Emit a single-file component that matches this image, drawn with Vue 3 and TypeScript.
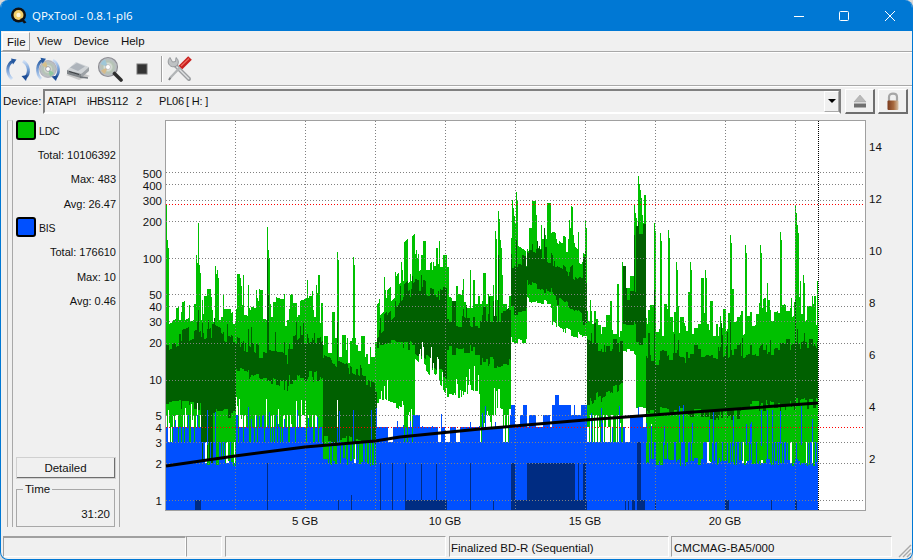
<script setup lang="ts">
type Seg = [number, number, number, number, number, number, number, number, number, number, number, number, number]

// x0,x1, lightTop0,1, darkTop0,1, darkBot0,1, lightBot0,1, blueTop, pWhite, pBlueFront
const segs: Seg[] = [
  [166, 201, 322, 304, 345, 328, 405, 405, 418, 418, 427, 0.2, 0.06],
  [201, 213, 310, 310, 335, 330, 462, 462, 462, 462, 442, 0.02, 0.02],
  [213, 236, 322, 318, 330, 345, 412, 412, 462, 462, 442, 0.05, 0.06],
  [236, 288, 304, 312, 345, 360, 370, 385, 425, 430, 427, 0.12, 0.12],
  [288, 323, 312, 308, 345, 335, 380, 375, 425, 430, 427, 0.12, 0.12],
  [323, 377, 350, 350, 352, 385, 441, 441, 462, 462, 442, 0.03, 0.05],
  [377, 415, 312, 272, 330, 285, 345, 345, 400, 412, 427, 0.15, 0.08],
  [415, 447, 268, 266, 285, 295, 350, 375, 356, 392, 427, 0.4, 0.08],
  [447, 480, 292, 296, 322, 325, 350, 350, 395, 392, 427, 0.25, 0.06],
  [480, 511, 304, 302, 318, 316, 360, 365, 412, 412, 427, 0.3, 0.08],
  [511, 527, 244, 254, 260, 265, 312, 312, 340, 342, 415, 0.05, 0.05],
  [527, 552, 236, 240, 250, 256, 284, 292, 300, 305, 402, 0.02, 0.0],
  [552, 587, 239, 262, 258, 285, 296, 322, 322, 340, 405, 0.02, 0.0],
  [587, 623, 322, 322, 345, 345, 403, 385, 442, 442, 442, 0.04, 0.08],
  [623, 636, 276, 276, 296, 296, 322, 322, 352, 352, 427, 0.03, 0.0],
  [636, 646, 206, 206, 230, 230, 340, 340, 405, 405, 427, 0.1, 0.1],
  [646, 740, 324, 322, 358, 352, 412, 416, 462, 462, 442, 0.01, 0.12],
  [740, 818, 320, 314, 350, 342, 408, 402, 462, 462, 442, 0.01, 0.12],
]

const spikes: Record<number, number> = {
  166: 205, 167: 240, 196: 255, 198: 223, 199: 265, 215: 266, 217: 270, 240: 278, 256: 290, 267: 227, 268: 250,
  316: 285, 337: 252, 353: 257, 385: 290, 401: 262, 416: 250, 431: 262, 495: 231, 498: 211, 500: 240, 512: 200,
  514: 216, 516: 192, 569: 220, 573: 235, 585: 220, 622: 262, 634: 205, 636: 218, 638: 176, 640: 190, 642: 215,
  654: 223, 660: 233, 668: 230, 676: 262, 690: 262, 705: 270, 730: 235, 745: 245, 760: 245, 780: 232, 795: 205,
  797: 225, 803: 275, 812: 296,
}
const darkSpikes: Record<number, number> = {
  267: 258, 268: 295, 198: 310, 337: 322, 495: 300, 498: 255, 516: 240, 569: 272, 585: 250, 634: 235, 638: 222,
  654: 290, 795: 300, 730: 320,
}
const levels = [463, 442, 427, 415, 405, 395]
const lowEnds = [415, 427, 442]

const darkBlueRanges: [number, number, number][] = [
  [195, 201, 500], [267, 268, 463], [338, 339, 500], [351, 352, 495], [405, 447, 500], [380, 381, 463], [392, 393, 463],
  [405, 406, 463], [421, 422, 463], [436, 437, 463], [470, 471, 463], [493, 494, 500], [511, 587, 500], [511, 515, 463],
  [527, 575, 463], [578, 579, 463], [583, 586, 463], [625, 626, 500], [628, 629, 500], [632, 635, 500], [637, 641, 442],
  [641, 645, 500], [655, 656, 500], [725, 729, 500], [771, 772, 500], [795, 797, 500],
]

let seed = 20240611
const rnd = (): number => {
  seed = (Math.imul(seed, 1664525) + 1013904223) >>> 0
  return seed / 4294967296
}
const f = (v: number): string => Math.round(v).toString()

let blue = ''
let blueFront = ''
let light = ''
let dark = ''
let darkBlue = ''

let hold = 0
let nLt = 0
let nDt = 0
let nDb = 0
let nLb = 0
let hb = 0
let levelShift = 0

for (const s of segs) {
  for (let x = s[0]; x < s[1]; x++) {
    const t = (x - s[0]) / (s[1] - s[0])
    const mix = (a: number, b: number): number => a + (b - a) * t
    if (hold <= 0) {
      hold = 1 + Math.floor(rnd() * 4)
      nLt = (rnd() - 0.5) * 30
      if (rnd() < 0.22) nLt -= rnd() * 34
      nDt = (rnd() - 0.5) * 16
      if (rnd() < 0.08) nDt -= rnd() * 26
      nDb = (rnd() - 0.5) * 12
      nLb = (rnd() - 0.5) * 8
    }
    hold--
    if (hb <= 0) {
      hb = 1 + Math.floor(rnd() * 5)
      const r = rnd()
      levelShift = r < 0.18 ? 1 : r < 0.3 ? -1 : 0
    }
    hb--
    let lt = mix(s[2], s[3]) + nLt
    const sp = spikes[x] !== undefined ? spikes[x] : spikes[x - 1]
    if (sp !== undefined) lt = sp + (spikes[x] === undefined ? 8 : 0)
    let dt = mix(s[4], s[5]) + nDt
    if (rnd() < 0.06) dt -= rnd() * 20
    if (darkSpikes[x] !== undefined) dt = darkSpikes[x]
    let db = mix(s[6], s[7]) + nDb
    let lb = mix(s[8], s[9]) + nLb
    const baseLevel = levels.indexOf(s[10]) >= 0 ? levels.indexOf(s[10]) : 2
    const idx = Math.max(0, Math.min(levels.length - 1, baseLevel + levelShift))
    const bt = levels[idx]
    if (lb > 410 && lb < 450) lb = lowEnds[Math.floor(rnd() * 3)]
    if (rnd() < s[11]) lb = Math.min(lb, bt) - rnd() * 28
    if (lb > 450 && rnd() < 0.38) lb = 442
    if (db > 450 && rnd() < 0.35) db = 442
    const px = x + 0.5
    blue += `M${px} 510V${bt}`
    light += `M${px} ${f(lb)}V${f(lt)}`
    if (db > dt) dark += `M${px} ${f(Math.min(db, lb))}V${f(dt)}`
    if (rnd() < s[12]) blueFront += `M${px} ${f(442 + rnd() * 4)}V${f(405 + rnd() * 22)}`
  }
}
for (const [a, b, top] of darkBlueRanges) {
  for (let x = a; x < b; x++) darkBlue += `M${x + 0.5} 510V${top}`
}

const gridY = [172, 184, 200, 221, 258, 294, 306, 321, 343, 380, 415, 442, 463, 500]
const gridX = [235, 305, 375, 445, 515, 585, 655, 725, 795]
const leftLabels: [string, number][] = [
  ['500', 174], ['400', 186], ['300', 201], ['200', 222], ['100', 259], ['50', 295], ['40', 307], ['30', 322],
  ['20', 343], ['10', 380], ['5', 416], ['4', 428], ['3', 443], ['2', 464], ['1', 501],
]
const rightLabels: [string, number][] = [
  ['14', 147], ['12', 199], ['10', 251], ['8', 303], ['6', 355], ['4', 407], ['2', 459],
]
const bottomLabels: [string, number][] = [['5 GB', 305], ['10 GB', 445], ['15 GB', 585], ['20 GB', 725]]
const linePts = '166,466 235,456 305,447 375,441 400,437 480,429 585,420 680,413 818,403'

const stats = [
  { name: 'LDC', cls: 'sw-green', rows: [['Total:', '10106392'], ['Max:', '483'], ['Avg:', '26.47']] },
  { name: 'BIS', cls: 'sw-blue', rows: [['Total:', '176610'], ['Max:', '10'], ['Avg:', '0.46']] },
]
const menus = ['File', 'View', 'Device', 'Help']
</script>

<template>
  <div class="window">
    <header class="titlebar">
      <svg class="appicon" width="18" height="18" viewBox="0 0 18 18">
        <circle cx="8.5" cy="8" r="7.5" fill="#111" />
        <circle cx="8.5" cy="8" r="5" fill="#f2cf6a" />
        <circle cx="8.5" cy="8" r="2.2" fill="#fff6d8" />
        <path d="M10 12 L14 16.5 L16.5 15.5 L12.5 11 Z" fill="#111" />
      </svg>
      <span class="title">QPxTool - 0.8.1-pl6</span>
      <div class="winctl">
        <svg width="45" height="30" viewBox="0 0 45 30"><path d="M18 15.5H28" stroke="#fff" /></svg>
        <svg width="46" height="30" viewBox="0 0 46 30"><rect x="18.5" y="10.5" width="9" height="9" rx="1" fill="none" stroke="#fff" /></svg>
        <svg width="46" height="30" viewBox="0 0 46 30"><path d="M18 10L28 20M28 10L18 20" stroke="#fff" /></svg>
      </div>
    </header>

    <nav class="menubar">
      <span v-for="(m, i) in menus" :key="m" class="menu" :class="{ active: i === 0 }">{{ m }}</span>
    </nav>

    <div class="toolbar">
      <svg class="tool" width="26" height="26" viewBox="0 0 26 26">
        <defs>
          <linearGradient id="arcL" x1="0" y1="0" x2="0" y2="1">
            <stop offset="0" stop-color="#24589f" /><stop offset="0.55" stop-color="#7fa6da" /><stop offset="1" stop-color="#cfe0f5" />
          </linearGradient>
          <linearGradient id="arcR" x1="0" y1="0" x2="0" y2="1">
            <stop offset="0" stop-color="#cfe0f5" /><stop offset="0.45" stop-color="#7fa6da" /><stop offset="1" stop-color="#1d4d96" />
          </linearGradient>
        </defs>
        <path d="M8 5 C2 8 0.5 17 7 23" fill="none" stroke="url(#arcL)" stroke-width="3" />
        <path d="M6 2.5 L11.5 3.5 L8 8.5 Z" fill="#24589f" />
        <path d="M18 5 C24 9 25.5 17 20 22" fill="none" stroke="url(#arcR)" stroke-width="3" />
        <path d="M16.5 20 L22.5 19 L21 25 Z" fill="#1d4d96" />
      </svg>
      <svg class="tool" width="26" height="26" viewBox="0 0 26 26">
        <defs>
          <radialGradient id="disc" cx="0.5" cy="0.5" r="0.5">
            <stop offset="0.2" stop-color="#f4f4f4" /><stop offset="0.55" stop-color="#b5c4b4" /><stop offset="1" stop-color="#bcbcc8" />
          </radialGradient>
        </defs>
        <circle cx="13" cy="13" r="8.5" fill="url(#disc)" stroke="#9a9aa2" stroke-width="0.6" />
        <path d="M13 13 L7 9 A8 8 0 0 1 11 5.5 Z" fill="#d7c08a" />
        <path d="M13 13 L19 17 A8 8 0 0 1 15 20.5 Z" fill="#90c6a0" />
        <circle cx="13" cy="13" r="2.4" fill="#fff" stroke="#8a8a90" stroke-width="0.8" />
        <path d="M8 4 C1.5 7 0.5 17 6 23" fill="none" stroke="url(#arcL)" stroke-width="2.6" />
        <path d="M5.5 1.8 L11 2.8 L7.5 7.6 Z" fill="#24589f" />
        <path d="M18 4 C24.5 8 25.5 17 20 22.5" fill="none" stroke="url(#arcR)" stroke-width="2.6" />
        <path d="M16.5 20.5 L22.5 19.5 L21 25 Z" fill="#1d4d96" />
      </svg>
      <svg class="tool t-drive" width="26" height="26" viewBox="0 0 26 26">
        <path d="M1 19 L14 24 L25 20 L12 15 Z" fill="#b5b5b5" opacity="0.7" />
        <path d="M2 14 L11 6 L24 11 L16 18 Z" fill="#cfd3d6" />
        <path d="M2 14 L16 18 L16 22 L2 18 Z" fill="#7f8488" />
        <path d="M16 18 L24 11 L24 15 L16 22 Z" fill="#9da2a6" />
        <path d="M5 11.5 L12 7 L20 10.5 L13 15 Z" fill="#aeb4bb" />
        <path d="M4 15.5 L14 18.5" stroke="#3b3e42" stroke-width="1" />
        <path d="M15 21 L23 22" stroke="#70757a" stroke-width="1.4" />
      </svg>
      <svg class="tool" width="26" height="26" viewBox="0 0 26 26">
        <circle cx="11" cy="11" r="9.5" fill="url(#disc)" stroke="#8f8f94" stroke-width="1.2" />
        <path d="M11 11 L3.5 8 A8 8 0 0 1 8 3.2 Z" fill="#9fc7d8" />
        <path d="M11 11 L4 14.5 A8 8 0 0 0 8 18 Z" fill="#d6bb8c" />
        <circle cx="11" cy="11" r="2.5" fill="#fff" stroke="#a0a0a0" stroke-width="0.6" />
        <path d="M17.5 17.5 L24 24" stroke="#2e2e2e" stroke-width="3.6" stroke-linecap="round" />
      </svg>
      <svg class="tool stop" width="12" height="12" viewBox="0 0 12 12">
        <rect x="1" y="1" width="10" height="10" fill="#333" stroke="#777" stroke-width="1" />
      </svg>
      <span class="tsep"></span>
      <svg class="tool" width="26" height="26" viewBox="0 0 26 26">
        <path d="M7 8 L22 23" stroke="#9c9fa2" stroke-width="4" stroke-linecap="round" />
        <path d="M7 8 L22 23" stroke="#dfe1e2" stroke-width="1.4" />
        <path d="M3 1.5 C0.5 4 0.5 8 3.5 10 C6 11.5 9 11 10.5 9 C12 6.5 11.5 3.5 9 1.5 L8.5 5.5 L5.5 6 L3 1.5 Z" fill="#bfc2c4" stroke="#808386" stroke-width="0.7" />
        <path d="M13 11.5 L3.5 21.5" stroke="#b2b5b7" stroke-width="2.4" />
        <path d="M3.5 21.5 L2 24" stroke="#7c7f82" stroke-width="2" />
        <path d="M13.5 11.5 L23 2" stroke="#c9201f" stroke-width="5.2" />
        <path d="M14 10 L22 2.5" stroke="#ef6d60" stroke-width="1.2" />
      </svg>
    </div>

    <div class="devicebar">
      <label class="devlabel">Device:</label>
      <div class="combo">
        <div class="combotext">
          <span class="d1">ATAPI</span>
          <span class="d2">iHBS112</span>
          <span class="d3">2</span>
          <span class="d4">PL06</span>
          <span>[ H: ]</span>
        </div>
        <span class="comboarrow"><i></i></span>
      </div>
      <button class="iconbtn">
        <svg width="16" height="16" viewBox="0 0 16 16">
          <path d="M8 2 L14 9 H2 Z" fill="#b9b9b9" stroke="#9a9a9a" stroke-width="0.5" />
          <rect x="2" y="10.5" width="12" height="4" fill="#6f6f6f" />
        </svg>
      </button>
      <button class="iconbtn">
        <svg width="18" height="20" viewBox="0 0 18 20">
          <defs>
            <linearGradient id="lockb" x1="0" y1="0" x2="1" y2="0">
              <stop offset="0" stop-color="#7a3b1e" /><stop offset="0.55" stop-color="#a86a3e" /><stop offset="1" stop-color="#d6c2a8" />
            </linearGradient>
          </defs>
          <path d="M5 10 V6 C5 1.5 13 1.5 13 6 V10" fill="none" stroke="#a6a6a6" stroke-width="2.2" />
          <rect x="3.5" y="9.5" width="11" height="9.5" rx="1" fill="url(#lockb)" />
        </svg>
      </button>
    </div>

    <main class="mainarea">
      <aside class="side">
        <div class="strip"></div>
        <div class="panel">
          <section v-for="g in stats" :key="g.name" class="stat">
            <div class="legend">
              <span class="swatch" :class="g.cls"></span>
              <span class="lname">{{ g.name }}</span>
            </div>
            <div v-for="r in g.rows" :key="r[0]" class="row">
              <span>{{ r[0] }}</span>
              <span>{{ r[1] }}</span>
            </div>
          </section>
          <button class="detail">Detailed</button>
          <fieldset class="timebox">
            <legend>Time</legend>
            <div class="timeval">31:20</div>
          </fieldset>
        </div>
      </aside>

      <svg class="chart" width="791" height="413" viewBox="120 116 791 413">
        <rect x="165.5" y="120.5" width="700" height="390" fill="#fff" stroke="#a0a0a0" />
        <g shape-rendering="crispEdges" fill="none" stroke-width="1">
          <path :d="blue" stroke="#0050ff" />
          <path :d="light" stroke="#00c000" />
          <path :d="dark" stroke="#006000" />
          <path :d="blueFront" stroke="#0050ff" />
          <path :d="darkBlue" stroke="#002c82" />
          <path d="M818.5 121V510" stroke="#000" stroke-dasharray="1 1" />
          <g stroke="#808080" stroke-dasharray="1 2">
            <line v-for="y in gridY" :key="'h' + y" x1="166" :y1="y + 0.5" x2="865" :y2="y + 0.5" />
            <line v-for="x in gridX" :key="'v' + x" :x1="x + 0.5" y1="121" :x2="x + 0.5" y2="510" />
          </g>
          <g stroke="#ff0000" stroke-dasharray="1 2">
            <line x1="166" y1="204.5" x2="865" y2="204.5" />
            <line x1="166" y1="427.5" x2="865" y2="427.5" />
          </g>
        </g>
        <polyline :points="linePts" fill="none" stroke="#000" stroke-width="3" />
        <g class="axis">
          <text v-for="l in leftLabels" :key="'l' + l[0]" x="162" :y="l[1] + 4" text-anchor="end">{{ l[0] }}</text>
          <text v-for="l in rightLabels" :key="'r' + l[0]" x="869" :y="l[1] + 4">{{ l[0] }}</text>
          <text v-for="l in bottomLabels" :key="'b' + l[0]" :x="l[1]" y="525" text-anchor="middle">{{ l[0] }}</text>
        </g>
      </svg>
    </main>

    <footer class="statusbar">
      <div class="cell c1"></div>
      <div class="cell c2"></div>
      <div class="cell c3"></div>
      <div class="cell c4">Finalized BD-R (Sequential)</div>
      <div class="cell c5">CMCMAG-BA5/000</div>
      <svg class="grip" width="19" height="19" viewBox="0 0 19 19">
        <path d="M18 6L6 18M18 10L10 18M18 14L14 18" stroke="#a8a8a8" stroke-width="1.4" />
      </svg>
    </footer>
  </div>
</template>

<style scoped>
.window {
  box-sizing: border-box;
  width: 913px;
  height: 560px;
  display: flex;
  flex-direction: column;
  overflow: hidden;
  background: #f0f0f0;
  border: 1px solid #0078d4;
  border-top: none;
  border-radius: 8px;
  font-family: "Liberation Sans", Arial, sans-serif;
  font-size: 11px;
  color: #111;
}
.titlebar {
  flex: 0 0 31px;
  display: flex;
  align-items: center;
  background: #0078d4;
  color: #fff;
  padding-left: 9px;
}
.appicon { margin-right: 4px; }
.title {
  font-family: "Open Sans", "Noto Sans", sans-serif;
  font-size: 11.5px;
}
.winctl {
  margin-left: auto;
  display: flex;
  margin-right: -1px;
}
.menubar {
  box-sizing: border-box;
  flex: 0 0 21px;
  display: flex;
  align-items: center;
  padding-left: 1px;
  gap: 2px;
  border-bottom: 1px solid #a8a8a8;
  box-shadow: 0 1px 0 #fff;
  position: relative;
}
.menu {
  padding: 0 5px;
  height: 19px;
  line-height: 18px;
  font-size: 11.5px;
}
.menu.active {
  box-sizing: border-box;
  width: 28px;
  background: #f4f4f4;
  border: 1px solid;
  border-color: #fff #a0a0a0 #a0a0a0 #fff;
  padding: 0 4px;
}
.toolbar {
  box-sizing: border-box;
  flex: 0 0 34px;
  display: flex;
  align-items: center;
  padding: 0 0 0 4px;
  border-bottom: 1px solid #a8a8a8;
  box-shadow: 0 1px 0 #fff;
  position: relative;
  gap: 4px;
}
.tool { flex: none; }
.t-drive { margin-right: 2px; }
.stop { margin: 0 9px 0 9px; }
.tsep {
  width: 1px;
  height: 26px;
  background: #a0a0a0;
  border-right: 1px solid #fff;
}
.devicebar {
  flex: 0 0 30px;
  display: flex;
  align-items: center;
  padding: 0 3px 0 2px;
  box-sizing: border-box;
}
.devlabel {
  width: 40px;
  font-size: 11.5px;
}
.combo {
  box-sizing: border-box;
  width: 798px;
  height: 25px;
  display: flex;
  align-items: center;
  background: #f0f0f0;
  border: 2px solid;
  border-color: #808080 #fff #fff #808080;
  border-right-color: #808080;
  border-bottom-color: #fff;
}
.combotext {
  flex: 1;
  display: flex;
  padding-left: 2px;
  font-size: 11px;
  letter-spacing: -0.2px;
}
.d1 { width: 40px; }
.d2 { width: 49px; }
.d3 { width: 23px; }
.d4 { width: 27px; }
.comboarrow {
  width: 15px;
  height: 21px;
  display: flex;
  align-items: center;
  justify-content: center;
  background: #f0f0f0;
  border-left: 1px solid #fff;
  border-top: 1px solid #fff;
  border-right: 1px solid #aaa;
  border-bottom: 1px solid #aaa;
  box-sizing: border-box;
}
.comboarrow i {
  width: 0;
  height: 0;
  border: 4px solid transparent;
  border-top: 4px solid #000;
  border-bottom: none;
}
.iconbtn {
  box-sizing: border-box;
  width: 30px;
  height: 25px;
  margin-left: 4px;
  padding: 0;
  display: flex;
  align-items: center;
  justify-content: center;
  background: #f0f0f0;
  border: 1px solid;
  border-color: #fff #6e6e6e #6e6e6e #fff;
  border-width: 1px 2px 2px 1px;
}
.iconbtn + .iconbtn { margin-left: 3px; }
.mainarea {
  flex: 0 0 413px;
  display: flex;
  height: 413px;
}
.side {
  display: flex;
  margin: 4px 0 2px 6px;
  width: 113px;
  flex: none;
}
.strip {
  box-sizing: border-box;
  width: 6px;
  flex: none;
  border-left: 1px solid #a8a8a8;
  border-right: 1px solid #a8a8a8;
  border-top: 1px solid #dcdcdc;
}
.panel {
  flex: 1;
  display: flex;
  flex-direction: column;
  padding-left: 3px;
  padding-right: 3px;
  border-right: 1px solid #a8a8a8;
  box-sizing: border-box;
}
.stat { margin-bottom: 3.75px; }
.legend {
  display: flex;
  align-items: center;
  gap: 3px;
  height: 20px;
}
.lname {
  font-size: 10.5px;
  letter-spacing: -0.2px;
  padding-top: 2px;
}
.swatch {
  box-sizing: border-box;
  width: 20px;
  height: 20px;
  border: 2px solid #000;
  border-radius: 3px;
}
.sw-green { background: #00c000; }
.sw-blue { background: #0050ff; }
.row {
  display: flex;
  justify-content: flex-end;
  gap: 3px;
  height: 24.5px;
  align-items: center;
  padding-top: 5px;
  box-sizing: border-box;
}
.detail {
  margin-top: auto;
  box-sizing: border-box;
  width: 100px;
  height: 22px;
  font: inherit;
  font-size: 11.5px;
  color: #111;
  background: #f0f0f0;
  border-style: solid;
  border-width: 1px 2px 2px 1px;
  border-color: #fff #6e6e6e #6e6e6e #fff;
  outline: 1px solid #d0d0d0;
  outline-offset: -1px;
  padding: 0;
}
.timebox {
  box-sizing: border-box;
  margin: 4px 0 0;
  padding: 0 4px 0 0;
  width: 99px;
  height: 44px;
  border: 1px solid #a8a8a8;
}
.timebox legend {
  font-size: 11.5px;
  padding: 0 2px;
  margin-left: 6px;
  line-height: 12px;
}
.timeval {
  text-align: right;
  margin-top: 13px;
  font-size: 11.5px;
}
.chart { flex: none; display: block; }
.axis text {
  font-family: "Liberation Sans", Arial, sans-serif;
  font-size: 11.5px;
  fill: #111;
}
.statusbar {
  flex: 0 0 30px;
  box-sizing: border-box;
  display: flex;
  align-items: flex-start;
  padding: 7px 0 0 2px;
}
.cell {
  box-sizing: border-box;
  height: 21px;
  line-height: 22px;
  font-size: 11.5px;
  padding-left: 2px;
  border: 1px solid;
  border-color: #a0a0a0 #fff #fff #a0a0a0;
}
.c1 { width: 183px; border-top-width: 2px; }
.c2 { width: 36px; }
.c3 { width: 221px; margin-left: 3px; }
.c4 { width: 220px; margin-left: 3px; padding-left: 1px; }
.c5 { width: 221px; margin-left: 2px; }
.grip { margin-left: 1px; margin-top: 3px; }
</style>

<style>
html, body { margin: 0; background: #d9d9d9; }
</style>
